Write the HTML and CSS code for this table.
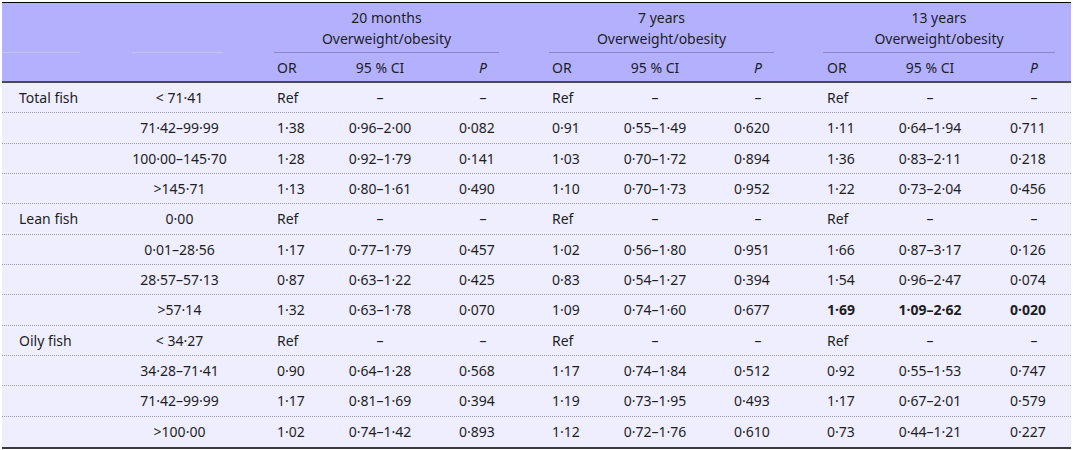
FILE: index.html
```html
<!DOCTYPE html>
<html>
<head>
<meta charset="utf-8">
<link rel="stylesheet" href="styles.css">
</head>
<body>
<div class="table">
  <div class="head">
    <div class="hrow1">
      <div class="hcell hc1"></div>
      <div class="hcell hc2"></div>
      <div class="hcell grp">20 months<br>Overweight/obesity</div>
      <div class="hcell grp">7 years<br>Overweight/obesity</div>
      <div class="hcell grp last">13 years<br>Overweight/obesity</div>
    </div>
    <div class="row hrow2">
      <div></div><div></div>
      <div class="or">OR</div><div class="ci">95 % CI</div><div class="p"><i>P</i></div>
      <div class="or">OR</div><div class="ci">95 % CI</div><div class="p"><i>P</i></div>
      <div class="or">OR</div><div class="ci">95 % CI</div><div class="p p3"><i>P</i></div>
    </div>
  </div>
  <div class="body">
    <div class="row"><div class="lab">Total fish</div><div class="rng">&lt; 71·41</div>
      <div class="or">Ref</div><div class="ci">–</div><div class="p">–</div>
      <div class="or">Ref</div><div class="ci">–</div><div class="p">–</div>
      <div class="or">Ref</div><div class="ci">–</div><div class="p p3">–</div></div>
    <div class="row"><div class="lab"></div><div class="rng">71·42–99·99</div>
      <div class="or">1·38</div><div class="ci">0·96–2·00</div><div class="p pn">0·082</div>
      <div class="or">0·91</div><div class="ci">0·55–1·49</div><div class="p pn">0·620</div>
      <div class="or">1·11</div><div class="ci">0·64–1·94</div><div class="p p3 pn">0·711</div></div>
    <div class="row"><div class="lab"></div><div class="rng">100·00–145·70</div>
      <div class="or">1·28</div><div class="ci">0·92–1·79</div><div class="p pn">0·141</div>
      <div class="or">1·03</div><div class="ci">0·70–1·72</div><div class="p pn">0·894</div>
      <div class="or">1·36</div><div class="ci">0·83–2·11</div><div class="p p3 pn">0·218</div></div>
    <div class="row"><div class="lab"></div><div class="rng">&gt;145·71</div>
      <div class="or">1·13</div><div class="ci">0·80–1·61</div><div class="p pn">0·490</div>
      <div class="or">1·10</div><div class="ci">0·70–1·73</div><div class="p pn">0·952</div>
      <div class="or">1·22</div><div class="ci">0·73–2·04</div><div class="p p3 pn">0·456</div></div>
    <div class="row"><div class="lab">Lean fish</div><div class="rng">0·00</div>
      <div class="or">Ref</div><div class="ci">–</div><div class="p">–</div>
      <div class="or">Ref</div><div class="ci">–</div><div class="p">–</div>
      <div class="or">Ref</div><div class="ci">–</div><div class="p p3">–</div></div>
    <div class="row"><div class="lab"></div><div class="rng">0·01–28·56</div>
      <div class="or">1·17</div><div class="ci">0·77–1·79</div><div class="p pn">0·457</div>
      <div class="or">1·02</div><div class="ci">0·56–1·80</div><div class="p pn">0·951</div>
      <div class="or">1·66</div><div class="ci">0·87–3·17</div><div class="p p3 pn">0·126</div></div>
    <div class="row"><div class="lab"></div><div class="rng">28·57–57·13</div>
      <div class="or">0·87</div><div class="ci">0·63–1·22</div><div class="p pn">0·425</div>
      <div class="or">0·83</div><div class="ci">0·54–1·27</div><div class="p pn">0·394</div>
      <div class="or">1·54</div><div class="ci">0·96–2·47</div><div class="p p3 pn">0·074</div></div>
    <div class="row"><div class="lab"></div><div class="rng">&gt;57·14</div>
      <div class="or">1·32</div><div class="ci">0·63–1·78</div><div class="p pn">0·070</div>
      <div class="or">1·09</div><div class="ci">0·74–1·60</div><div class="p pn">0·677</div>
      <div class="or b">1·69</div><div class="ci b">1·09–2·62</div><div class="p p3 pn b">0·020</div></div>
    <div class="row"><div class="lab">Oily fish</div><div class="rng">&lt; 34·27</div>
      <div class="or">Ref</div><div class="ci">–</div><div class="p">–</div>
      <div class="or">Ref</div><div class="ci">–</div><div class="p">–</div>
      <div class="or">Ref</div><div class="ci">–</div><div class="p p3">–</div></div>
    <div class="row"><div class="lab"></div><div class="rng">34·28–71·41</div>
      <div class="or">0·90</div><div class="ci">0·64–1·28</div><div class="p pn">0·568</div>
      <div class="or">1·17</div><div class="ci">0·74–1·84</div><div class="p pn">0·512</div>
      <div class="or">0·92</div><div class="ci">0·55–1·53</div><div class="p p3 pn">0·747</div></div>
    <div class="row"><div class="lab"></div><div class="rng">71·42–99·99</div>
      <div class="or">1·17</div><div class="ci">0·81–1·69</div><div class="p pn">0·394</div>
      <div class="or">1·19</div><div class="ci">0·73–1·95</div><div class="p pn">0·493</div>
      <div class="or">1·17</div><div class="ci">0·67–2·01</div><div class="p p3 pn">0·579</div></div>
    <div class="row"><div class="lab"></div><div class="rng">&gt;100·00</div>
      <div class="or">1·02</div><div class="ci">0·74–1·42</div><div class="p pn">0·893</div>
      <div class="or">1·12</div><div class="ci">0·72–1·76</div><div class="p pn">0·610</div>
      <div class="or">0·73</div><div class="ci">0·44–1·21</div><div class="p p3 pn">0·227</div></div>
  </div>
</div>
</body>
</html>
```
FILE: styles.css
```css
html, body {
  margin: 0;
  padding: 0;
  background: #ffffff;
}
body {
  font-family: "Noto Sans", "Open Sans", sans-serif;
  font-size: 14px;
  color: #1e1e1e;
}
.table {
  margin: 2px 2px 0 2px;
  width: 1069px;
  border-top: 1px solid #000;
  border-bottom: 2px solid #3a3a3a;
}
.head {
  background: #b3b1fe;
  border-bottom: 2px solid #4a4a55;
}
.hrow1 {
  display: grid;
  grid-template-columns: 104px 143px 275px 275px 272px;
  height: 50px;
}
.hcell {
  display: flex;
  align-items: center;
  justify-content: center;
  text-align: center;
  line-height: 21px;
  padding-top: 1px;
  border-bottom: 1px solid #8a88c8;
  margin: 0 25px;
}
.hcell.last {
  margin: 0 16px 0 24px;
}
.hc1 {
  margin: 0 26px 0 0;
  border-bottom-color: #c4c2ff;
}
.hc2 {
  margin: 0 26px 0 26px;
  border-bottom-color: #c4c2ff;
}
.row {
  display: grid;
  grid-template-columns: 104px 143px 81px 100px 94px 81px 100px 94px 81px 100px 91px;
  align-items: center;
  white-space: nowrap;
}
.hrow2 {
  height: 28px;
}
.body {
  background: #eeeefe;
}
.body .row {
  height: 30.33px;
  box-sizing: border-box;
  border-bottom: 1px dotted #9a9aaa;
}
.body .row:last-child {
  border-bottom: none;
}
.lab {
  padding-left: 17px;
}
.rng {
  text-align: center;
  padding-left: 4px;
}
.or {
  padding-left: 28px;
}
.ci {
  text-align: center;
}
.p {
  text-align: center;
  padding-left: 12px;
}
.p.p3 {
  padding-left: 17px;
}
.pn {
  padding-right: 12px;
}
.b {
  font-weight: 700;
}
```
